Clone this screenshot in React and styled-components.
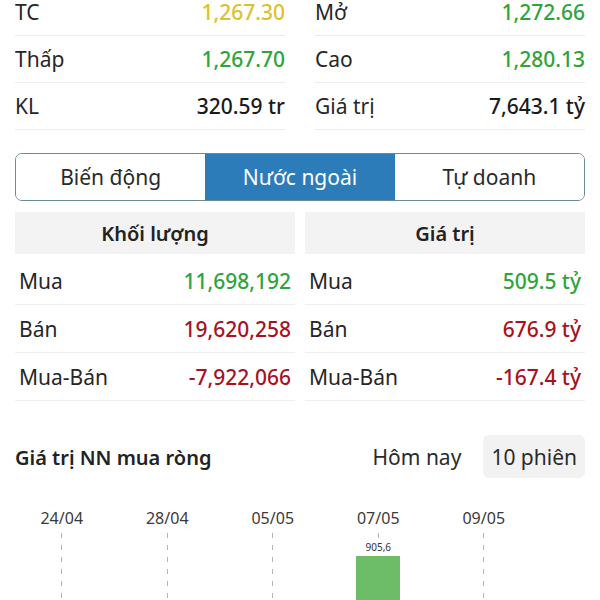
import React from 'react'
import styled, { createGlobalStyle } from 'styled-components'

const GlobalStyle = createGlobalStyle`
  html, body {
    margin: 0;
    padding: 0;
    background: #fff;
  }
  body {
    font-family: "Noto Sans", "Open Sans", sans-serif;
    color: #222;
  }
`

const Page = styled.div`
  width: 600px;
  height: 600px;
  overflow: hidden;
  padding: 0 15px;
  box-sizing: border-box;
`

const StatsGrid = styled.div`
  display: grid;
  grid-template-columns: 1fr 1fr;
  column-gap: 30px;
  margin-top: -11px;
`

const StatRow = styled.div`
  height: 46px;
  display: flex;
  align-items: center;
  justify-content: space-between;
  border-bottom: 1px solid #ececec;
  font-size: 21px;
  line-height: 1.05;
`

const Label = styled.span`
  color: #262626;
`

const Value = styled.span`
  font-weight: 500;
  color: ${p => p.color || '#1a1a1a'};
`

const Tabs = styled.div`
  display: grid;
  grid-template-columns: repeat(3, 1fr);
  margin-top: 23px;
  height: 48px;
  border: 1.5px solid #6a8c96;
  border-radius: 7px;
  overflow: hidden;
  box-sizing: border-box;
`

const Tab = styled.div`
  display: flex;
  align-items: center;
  justify-content: center;
  font-size: 21px;
  background: ${p => (p.active ? '#2b7cb9' : '#fff')};
  color: ${p => (p.active ? '#fff' : '#2a2a2a')};
`

const TradeGrid = styled.div`
  display: grid;
  grid-template-columns: 1fr 1fr;
  column-gap: 10px;
  margin-top: 11px;
`

const TradeHead = styled.div`
  height: 42px;
  background: #f3f3f3;
  display: flex;
  align-items: center;
  justify-content: center;
  font-size: 20px;
  font-weight: 600;
  color: #222;
  margin-bottom: 3px;
`

const TradeRow = styled.div`
  height: 47px;
  display: flex;
  align-items: center;
  justify-content: space-between;
  padding: 0 4px;
  border-bottom: 1px solid #efefef;
  font-size: 21px;
`

const ChartHeader = styled.div`
  display: flex;
  align-items: center;
  margin-top: 34px;
  height: 43px;
`

const ChartTitle = styled.div`
  font-size: 20px;
  font-weight: 600;
  color: #222;
  flex: 1;
  padding-top: 2px;
`

const RangeButton = styled.div`
  font-size: 21px;
  color: #2a2a2a;
  height: 43px;
  display: flex;
  align-items: center;
  padding: 0 8px;
  border-radius: 6px;
  background: ${p => (p.active ? '#f2f2f2' : 'transparent')};
  margin-left: ${p => p.gap || 0}px;
`

const Chart = styled.div`
  display: grid;
  grid-template-columns: repeat(5, 105.5px);
  margin-top: 28px;
  margin-left: -6px;
  height: 120px;
`

const Column = styled.div`
  display: flex;
  flex-direction: column;
  align-items: center;
`

const DateLabel = styled.div`
  font-size: 16px;
  color: #3a3a3a;
  height: 24px;
  line-height: 24px;
`

const Plot = styled.div`
  flex: 1;
  width: 100%;
  margin-top: 3px;
  display: flex;
  flex-direction: column;
  align-items: center;
  background-image: linear-gradient(to bottom, #b5b5b5 0 5px, transparent 5px);
  background-size: 1px 12px;
  background-repeat: repeat-y;
  background-position: center top;
`

const BarValue = styled.div`
  font-size: 10px;
  color: #333;
  background: #fff;
  padding: 0 2px;
  line-height: 12px;
`

const Bar = styled.div`
  width: 44px;
  background: #6dbd68;
  flex: 1;
  margin-top: 3px;
`

const stats = [
  ['TC', '1,267.30', '#dcc22a'],
  ['Mở', '1,272.66', '#2ea43a'],
  ['Thấp', '1,267.70', '#2ea43a'],
  ['Cao', '1,280.13', '#2ea43a'],
  ['KL', '320.59 tr'],
  ['Giá trị', '7,643.1 tỷ'],
]

const green = '#2ea43a'
const red = '#a8121f'

const trades = [
  {
    title: 'Khối lượng',
    rows: [
      ['Mua', '11,698,192', green],
      ['Bán', '19,620,258', red],
      ['Mua-Bán', '-7,922,066', red],
    ],
  },
  {
    title: 'Giá trị',
    rows: [
      ['Mua', '509.5 tỷ', green],
      ['Bán', '676.9 tỷ', red],
      ['Mua-Bán', '-167.4 tỷ', red],
    ],
  },
]

const sessions = [
  { date: '24/04' },
  { date: '28/04' },
  { date: '05/05' },
  { date: '07/05', value: '905,6', offset: 8 },
  { date: '09/05' },
]

function App() {
  return (
    <Page>
      <GlobalStyle />
      <StatsGrid>
        {stats.map(([label, value, color]) => (
          <StatRow key={label}>
            <Label>{label}</Label>
            <Value color={color}>{value}</Value>
          </StatRow>
        ))}
      </StatsGrid>

      <Tabs>
        <Tab>Biến động</Tab>
        <Tab active>Nước ngoài</Tab>
        <Tab>Tự doanh</Tab>
      </Tabs>

      <TradeGrid>
        {trades.map(t => (
          <div key={t.title}>
            <TradeHead>{t.title}</TradeHead>
            {t.rows.map(([label, value, color]) => (
              <TradeRow key={label}>
                <Label>{label}</Label>
                <Value color={color}>{value}</Value>
              </TradeRow>
            ))}
          </div>
        ))}
      </TradeGrid>

      <ChartHeader>
        <ChartTitle>Giá trị NN mua ròng</ChartTitle>
        <RangeButton>Hôm nay</RangeButton>
        <RangeButton active gap={14}>10 phiên</RangeButton>
      </ChartHeader>

      <Chart>
        {sessions.map(s => (
          <Column key={s.date}>
            <DateLabel>{s.date}</DateLabel>
            <Plot>
              {s.value && (
                <>
                  <BarValue style={{ marginTop: s.offset }}>{s.value}</BarValue>
                  <Bar />
                </>
              )}
            </Plot>
          </Column>
        ))}
      </Chart>
    </Page>
  )
}

export default App
